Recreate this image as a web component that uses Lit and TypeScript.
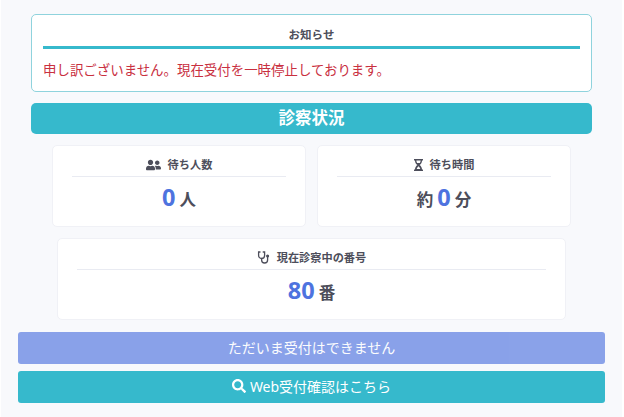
import { LitElement, html, css } from 'lit';
import { customElement } from 'lit/decorators.js';

const usersIcon = html`<svg class="ico" width="15" height="12" viewBox="0 0 640 512" fill="currentColor">
  <path d="M192 256c61.900 0 112-50.100 112-112S253.900 32 192 32 80 82.100 80 144s50.100 112 112 112zm76.800 32h-8.300c-20.800 10-43.900 16-68.500 16s-47.600-6-68.500-16h-8.300C51.600 288 0 339.600 0 403.200V432c0 26.500 21.500 48 48 48h288c26.500 0 48-21.500 48-48v-28.800c0-63.600-51.600-115.200-115.200-115.200zM480 256c53 0 96-43 96-96s-43-96-96-96-96 43-96 96 43 96 96 96zm48 32h-3.800c-13.900 4.800-28.600 8-44.200 8s-30.300-3.200-44.200-8H432c-20.400 0-39.200 5.900-55.700 15.400 24.400 26.300 39.700 61.200 39.700 99.800v38.400c0 2.200-.5 4.300-.6 6.400H592c26.500 0 48-21.500 48-48 0-61.900-50.100-112-112-112z"/>
</svg>`;

const hourglassIcon = html`<svg class="ico" width="9" height="12" viewBox="0 0 9 12" fill="currentColor">
  <path d="M0 0h9v1.500H8c0 2-1 3.500-2.400 4.500C7 7 8 8.500 8 10.500h1V12H0v-1.500h1C1 8.500 2 7 3.400 6 2 5 1 3.500 1 1.500H0zm2.400 1.500c0 1 .2 1.800.7 2.500h2.800c.5-.7.700-1.500.7-2.500zM4.500 7.200C3.600 7.900 3 8.800 2.700 10h3.600C6 8.800 5.400 7.900 4.500 7.200z"/>
</svg>`;

const stethoscopeIcon = html`<svg class="ico" width="13" height="13" viewBox="0 0 13 13" fill="none" stroke="currentColor" stroke-width="1.300" stroke-linecap="round">
  <path d="M3 1H1.600v3.500a3 3 0 0 0 6 0V1H6.200"/>
  <path d="M4.600 7.500V9a3 3 0 0 0 6 0V6.500"/>
  <circle cx="10.600" cy="5" r=".9" fill="currentColor"/>
</svg>`;

const searchIcon = html`<svg class="search" width="14" height="14" viewBox="0 0 512 512" fill="currentColor">
  <path d="M505 442.700L405.300 343c-4.500-4.500-10.600-7-17-7H372c27.600-35.300 44-79.700 44-128C416 93.100 322.900 0 208 0S0 93.100 0 208s93.100 208 208 208c48.300 0 92.700-16.400 128-44v16.300c0 6.400 2.500 12.500 7 17l99.700 99.700c9.400 9.400 24.600 9.400 33.900 0l28.300-28.300c9.400-9.400 9.400-24.600.1-34zM208 336c-70.700 0-128-57.200-128-128 0-70.700 57.200-128 128-128 70.700 0 128 57.200 128 128 0 70.700-57.200 128-128 128z"/>
</svg>`;

@customElement('app-root')
export class AppRoot extends LitElement {
  static styles = css`
    :host {
      display: block;
      height: 417px;
      overflow: hidden;
      box-sizing: border-box;
      margin: 0 2px 0 1px;
      padding: 14px 17px 0;
      background: #f8f9fc;
      color: #4d4e5b;
      font-family: "Noto Sans", "Noto Sans CJK JP", sans-serif;
    }
    .inner {
      margin: 0 13px;
    }
    .notice {
      box-sizing: border-box;
      height: 78px;
      padding: 12px 11px 0;
      background: #fff;
      border: 1px solid #8fd3dd;
      border-radius: 5px;
    }
    .notice h2 {
      margin: 0;
      height: 19px;
      border-bottom: 3px solid #36b9cc;
      font-size: 11.5px;
      line-height: 15px;
      font-weight: 700;
      text-align: center;
    }
    .notice p {
      margin: 11px 0 0;
      color: #c9303f;
      font-size: 13.44px;
      line-height: 20px;
    }
    .heading {
      margin-top: 11px;
      height: 31px;
      border-radius: 5px;
      background: #36b9cc;
      color: #fff;
      font-size: 16.5px;
      font-weight: 700;
      line-height: 30px;
      text-align: center;
    }
    .row {
      display: flex;
      justify-content: center;
      gap: 10.5px;
      margin-top: 11px;
    }
    .card {
      box-sizing: border-box;
      width: 254.5px;
      height: 82px;
      padding: 0 19px;
      background: #fff;
      border: 1px solid #f0f1f6;
      border-radius: 5px;
    }
    .wide {
      width: 509px;
    }
    .label {
      box-sizing: border-box;
      display: flex;
      align-items: center;
      justify-content: center;
      gap: 7px;
      height: 31px;
      padding-top: 7px;
      border-bottom: 1px solid #e9ebf2;
      font-size: 11.2px;
      font-weight: 700;
      line-height: 16px;
    }
    .ico {
      flex: none;
    }
    .value {
      display: flex;
      align-items: baseline;
      justify-content: center;
      gap: 4px;
      margin-top: 3px;
      font-size: 16.5px;
      font-weight: 700;
      line-height: 34px;
    }
    .value b {
      color: #4e73df;
      font-family: "Open Sans", sans-serif;
      font-size: 23.5px;
      font-weight: 700;
    }
    .btn {
      display: flex;
      align-items: center;
      justify-content: center;
      gap: 4px;
      width: 100%;
      height: 32px;
      border: 0;
      border-radius: 3px;
      color: #fff;
      font: inherit;
      font-size: 14px;
      padding: 0 0 2px;
    }
    .disabled {
      margin-top: 12px;
      background: #4e73df;
      opacity: 0.65;
    }
    .info {
      margin-top: 7px;
      background: #36b9cc;
    }
  `;

  render() {
    return html`
      <div class="inner">
        <section class="notice">
          <h2>お知らせ</h2>
          <p>申し訳ございません。現在受付を一時停止しております。</p>
        </section>
        <div class="heading">診察状況</div>
      </div>
      <div class="row">
        <div class="card">
          <div class="label">${usersIcon}待ち人数</div>
          <div class="value"><b>0</b><span>人</span></div>
        </div>
        <div class="card">
          <div class="label">${hourglassIcon}待ち時間</div>
          <div class="value"><span>約</span><b>0</b><span>分</span></div>
        </div>
      </div>
      <div class="row">
        <div class="card wide">
          <div class="label">${stethoscopeIcon}現在診察中の番号</div>
          <div class="value"><b>80</b><span>番</span></div>
        </div>
      </div>
      <button class="btn disabled" disabled>ただいま受付はできません</button>
      <button class="btn info">${searchIcon}Web受付確認はこちら</button>
    `;
  }
}
